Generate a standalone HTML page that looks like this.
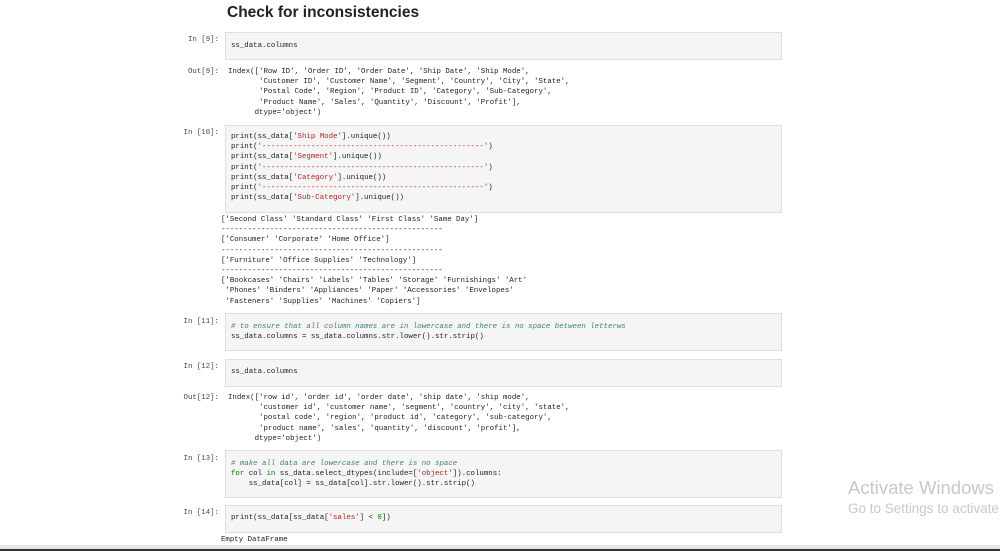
<!DOCTYPE html>
<html><head><meta charset="utf-8"><style>
html,body{margin:0;width:1000px;height:551px;overflow:hidden;}
body{background:#fff;position:relative;font-family:"Liberation Mono",monospace;}
.t{position:absolute;left:227px;top:4px;font:bold 15.5px "Liberation Sans",sans-serif;color:#222;}
.box{position:absolute;left:225px;width:555px;background:#f5f5f5;border:1px solid #dedede;}
pre{position:absolute;margin:0;font-family:"Liberation Mono",monospace;font-size:7.4px;line-height:10.2px;color:#222;white-space:pre;}
.p{position:absolute;font-family:"Liberation Mono",monospace;font-size:7.4px;color:#444;right:781px;}
.s{color:#ba2121}.k{color:#008000}.c{color:#408080;font-style:italic}
.clip{position:absolute;left:848px;width:152px;overflow:hidden;white-space:nowrap;color:#c8c8c8;font-family:"Liberation Sans",sans-serif;}
</style></head><body>
<div class="t">Check for inconsistencies</div>

<div class="p" style="top:36px">In [9]:</div>
<div class="box" style="top:32px;height:26px"></div>
<pre style="left:231px;top:41px">ss_data.columns</pre>

<div class="p" style="top:68px">Out[9]:</div>
<pre style="left:228px;top:67px">Index(['Row ID', 'Order ID', 'Order Date', 'Ship Date', 'Ship Mode',
       'Customer ID', 'Customer Name', 'Segment', 'Country', 'City', 'State',
       'Postal Code', 'Region', 'Product ID', 'Category', 'Sub-Category',
       'Product Name', 'Sales', 'Quantity', 'Discount', 'Profit'],
      dtype='object')</pre>

<div class="p" style="top:129px">In [10]:</div>
<div class="box" style="top:125px;height:86px"></div>
<pre style="left:231px;top:132px">print(ss_data[<span class="s">'Ship Mode'</span>].unique())
print(<span class="s">'--------------------------------------------------'</span>)
print(ss_data[<span class="s">'Segment'</span>].unique())
print(<span class="s">'--------------------------------------------------'</span>)
print(ss_data[<span class="s">'Category'</span>].unique())
print(<span class="s">'--------------------------------------------------'</span>)
print(ss_data[<span class="s">'Sub-Category'</span>].unique())</pre>

<pre style="left:221px;top:215px">['Second Class' 'Standard Class' 'First Class' 'Same Day']
--------------------------------------------------
['Consumer' 'Corporate' 'Home Office']
--------------------------------------------------
['Furniture' 'Office Supplies' 'Technology']
--------------------------------------------------
['Bookcases' 'Chairs' 'Labels' 'Tables' 'Storage' 'Furnishings' 'Art'
 'Phones' 'Binders' 'Appliances' 'Paper' 'Accessories' 'Envelopes'
 'Fasteners' 'Supplies' 'Machines' 'Copiers']</pre>

<div class="p" style="top:318px">In [11]:</div>
<div class="box" style="top:313px;height:36px"></div>
<pre style="left:231px;top:322px"><span class="c"># to ensure that all column names are in lowercase and there is no space between letterws</span>
ss_data.columns = ss_data.columns.str.lower().str.strip()</pre>

<div class="p" style="top:363px">In [12]:</div>
<div class="box" style="top:359px;height:26px"></div>
<pre style="left:231px;top:367px">ss_data.columns</pre>

<div class="p" style="top:394px">Out[12]:</div>
<pre style="left:228px;top:393px">Index(['row id', 'order id', 'order date', 'ship date', 'ship mode',
       'customer id', 'customer name', 'segment', 'country', 'city', 'state',
       'postal code', 'region', 'product id', 'category', 'sub-category',
       'product name', 'sales', 'quantity', 'discount', 'profit'],
      dtype='object')</pre>

<div class="p" style="top:455px">In [13]:</div>
<div class="box" style="top:450px;height:46px"></div>
<pre style="left:231px;top:459px"><span class="c"># make all data are lowercase and there is no space</span>
<span class="k">for</span> col <span class="k">in</span> ss_data.select_dtypes(include=[<span class="s">'object'</span>]).columns:
    ss_data[col] = ss_data[col].str.lower().str.strip()</pre>

<div class="p" style="top:509px">In [14]:</div>
<div class="box" style="top:505px;height:26px"></div>
<pre style="left:231px;top:513px">print(ss_data[ss_data[<span class="s">'sales'</span>] &lt; <span class="k">0</span>])</pre>

<pre style="left:221px;top:535px">Empty DataFrame</pre>

<div class="clip" style="top:477px;font-size:18.5px">Activate Windows</div>
<div class="clip" style="top:501px;font-size:13.5px">Go to Settings to activate Windows.</div>
<div style="position:absolute;left:0;top:545px;width:1000px;height:4px;background:#e6e6e6"></div>
<div style="position:absolute;left:0;top:549px;width:1000px;height:2px;background:#333"></div>
</body></html>
